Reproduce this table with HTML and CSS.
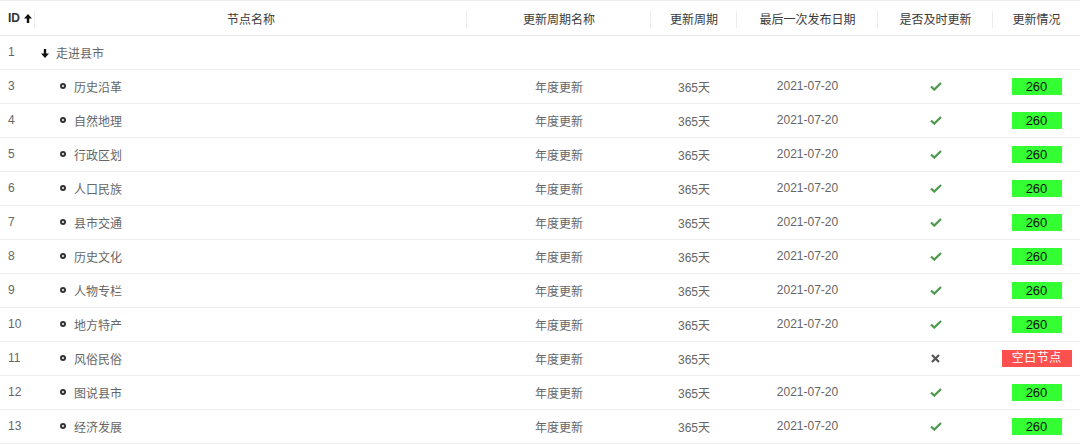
FILE: index.html
```html
<!DOCTYPE html>
<html lang="zh">
<head>
<meta charset="utf-8">
<link rel="stylesheet" href="styles.css">
</head>
<body>
<table class="grid">
  <colgroup>
    <col class="c-id"><col class="c-name"><col class="c-pname"><col class="c-period"><col class="c-date"><col class="c-timely"><col class="c-status">
  </colgroup>
  <thead>
    <tr>
      <th class="th-id">ID <svg class="sort" width="8" height="9" viewBox="0 0 8 9"><path d="M4 0 L8 4.5 H5.2 V9 H2.8 V4.5 H0 Z" fill="#111"/></svg></th>
      <th>节点名称</th>
      <th>更新周期名称</th>
      <th>更新周期</th>
      <th>最后一次发布日期</th>
      <th>是否及时更新</th>
      <th class="last">更新情况</th>
    </tr>
  </thead>
  <tbody>
    <tr>
      <td class="id">1</td>
      <td class="name"><span class="parent"><svg class="down" width="8" height="9" viewBox="0 0 8 9"><path d="M4 9 L8 4.5 H5.2 V0 H2.8 V4.5 H0 Z" fill="#111"/></svg>走进县市</span></td>
      <td></td><td></td><td></td><td></td><td></td>
    </tr>
    <tr><td class="id">3</td><td class="name"><span class="child"><i class="dot"></i>历史沿革</span></td><td>年度更新</td><td>365天</td><td>2021-07-20</td><td><svg class="ok" width="12" height="9" viewBox="0 0 12 9"><path d="M1 4.5 L4.3 7.6 L11 1" fill="none" stroke="#4d9a4d" stroke-width="2.2"/></svg></td><td><span class="badge good">260</span></td></tr>
    <tr><td class="id">4</td><td class="name"><span class="child"><i class="dot"></i>自然地理</span></td><td>年度更新</td><td>365天</td><td>2021-07-20</td><td><svg class="ok" width="12" height="9" viewBox="0 0 12 9"><path d="M1 4.5 L4.3 7.6 L11 1" fill="none" stroke="#4d9a4d" stroke-width="2.2"/></svg></td><td><span class="badge good">260</span></td></tr>
    <tr><td class="id">5</td><td class="name"><span class="child"><i class="dot"></i>行政区划</span></td><td>年度更新</td><td>365天</td><td>2021-07-20</td><td><svg class="ok" width="12" height="9" viewBox="0 0 12 9"><path d="M1 4.5 L4.3 7.6 L11 1" fill="none" stroke="#4d9a4d" stroke-width="2.2"/></svg></td><td><span class="badge good">260</span></td></tr>
    <tr><td class="id">6</td><td class="name"><span class="child"><i class="dot"></i>人口民族</span></td><td>年度更新</td><td>365天</td><td>2021-07-20</td><td><svg class="ok" width="12" height="9" viewBox="0 0 12 9"><path d="M1 4.5 L4.3 7.6 L11 1" fill="none" stroke="#4d9a4d" stroke-width="2.2"/></svg></td><td><span class="badge good">260</span></td></tr>
    <tr><td class="id">7</td><td class="name"><span class="child"><i class="dot"></i>县市交通</span></td><td>年度更新</td><td>365天</td><td>2021-07-20</td><td><svg class="ok" width="12" height="9" viewBox="0 0 12 9"><path d="M1 4.5 L4.3 7.6 L11 1" fill="none" stroke="#4d9a4d" stroke-width="2.2"/></svg></td><td><span class="badge good">260</span></td></tr>
    <tr><td class="id">8</td><td class="name"><span class="child"><i class="dot"></i>历史文化</span></td><td>年度更新</td><td>365天</td><td>2021-07-20</td><td><svg class="ok" width="12" height="9" viewBox="0 0 12 9"><path d="M1 4.5 L4.3 7.6 L11 1" fill="none" stroke="#4d9a4d" stroke-width="2.2"/></svg></td><td><span class="badge good">260</span></td></tr>
    <tr><td class="id">9</td><td class="name"><span class="child"><i class="dot"></i>人物专栏</span></td><td>年度更新</td><td>365天</td><td>2021-07-20</td><td><svg class="ok" width="12" height="9" viewBox="0 0 12 9"><path d="M1 4.5 L4.3 7.6 L11 1" fill="none" stroke="#4d9a4d" stroke-width="2.2"/></svg></td><td><span class="badge good">260</span></td></tr>
    <tr><td class="id">10</td><td class="name"><span class="child"><i class="dot"></i>地方特产</span></td><td>年度更新</td><td>365天</td><td>2021-07-20</td><td><svg class="ok" width="12" height="9" viewBox="0 0 12 9"><path d="M1 4.5 L4.3 7.6 L11 1" fill="none" stroke="#4d9a4d" stroke-width="2.2"/></svg></td><td><span class="badge good">260</span></td></tr>
    <tr><td class="id">11</td><td class="name"><span class="child"><i class="dot"></i>风俗民俗</span></td><td>年度更新</td><td>365天</td><td></td><td><svg class="no" width="9" height="9" viewBox="0 0 9 9"><path d="M1 1 L8 8 M8 1 L1 8" fill="none" stroke="#555" stroke-width="2.2"/></svg></td><td><span class="badge empty">空白节点</span></td></tr>
    <tr><td class="id">12</td><td class="name"><span class="child"><i class="dot"></i>图说县市</span></td><td>年度更新</td><td>365天</td><td>2021-07-20</td><td><svg class="ok" width="12" height="9" viewBox="0 0 12 9"><path d="M1 4.5 L4.3 7.6 L11 1" fill="none" stroke="#4d9a4d" stroke-width="2.2"/></svg></td><td><span class="badge good">260</span></td></tr>
    <tr><td class="id">13</td><td class="name"><span class="child"><i class="dot"></i>经济发展</span></td><td>年度更新</td><td>365天</td><td>2021-07-20</td><td><svg class="ok" width="12" height="9" viewBox="0 0 12 9"><path d="M1 4.5 L4.3 7.6 L11 1" fill="none" stroke="#4d9a4d" stroke-width="2.2"/></svg></td><td><span class="badge good">260</span></td></tr>
  </tbody>
</table>
</body>
</html>
```

FILE: styles.css
```css
html, body {
  margin: 0;
  padding: 0;
  background: #fff;
}
body {
  font-family: "Liberation Sans", Arial, "Noto Sans CJK SC", sans-serif;
  font-size: 12px;
  color: #666;
}
.grid {
  width: 1080px;
  border-collapse: collapse;
  table-layout: fixed;
  border-top: 1px solid #efefef;
}
.c-id { width: 35px; }
.c-name { width: 432px; }
.c-pname { width: 184px; }
.c-period { width: 86px; }
.c-date { width: 141px; }
.c-timely { width: 115px; }
.c-status { width: 87px; }

th {
  position: relative;
  height: 34px;
  padding: 0;
  font-weight: normal;
  color: #3a3a3a;
  text-align: center;
  border-bottom: 1px solid #e9e9e9;
  vertical-align: middle;
}
th::after {
  content: "";
  position: absolute;
  right: 0;
  top: 10px;
  height: 17px;
  width: 1px;
  background: #ececec;
}
th.last::after { display: none; }
th.th-id {
  text-align: left;
  padding-left: 8px;
  font-weight: bold;
  color: #333;
}
.sort {
  vertical-align: -1px;
  margin-left: 1px;
}
td {
  height: 32px;
  padding: 0 0 1px 0;
  text-align: center;
  vertical-align: middle;
  border-bottom: 1px solid #ededed;
}
td.id {
  text-align: left;
  padding-left: 8px;
}
td.name { text-align: left; }
.parent {
  display: flex;
  align-items: center;
  padding-left: 6px;
}
.down {
  margin-right: 7px;
  margin-top: 3px;
}
.child {
  display: flex;
  align-items: center;
  padding-left: 25px;
}
.dot {
  display: inline-block;
  box-sizing: border-box;
  width: 6px;
  height: 6px;
  border: 2px solid #333;
  border-radius: 50%;
  margin-right: 8px;
}
.ok, .no {
  vertical-align: middle;
}
.badge {
  display: inline-block;
  height: 17px;
  line-height: 17px;
  font-size: 13px;
  vertical-align: middle;
}
.badge.good {
  width: 50px;
  background: #33ff33;
  color: #111;
}
.badge.empty {
  width: 70px;
  font-size: 12px;
  background: #ff5050;
  color: #fff;
  letter-spacing: 0.5px;
  text-indent: 0.5px;
}
```
